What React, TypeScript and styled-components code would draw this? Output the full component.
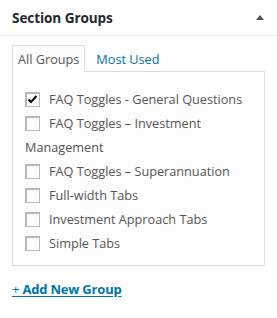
import React from "react";
import styled, { createGlobalStyle } from "styled-components";

const Global = createGlobalStyle`
  html, body { margin: 0; padding: 0; background: #fff; }
  body { font-family: "Open Sans", "Segoe UI", sans-serif; color: #555; }
  * { box-sizing: border-box; }
`;

const Box = styled.div`
  width: 277px;
  height: 318px;
  background: #fff;
`;

const Header = styled.div`
  height: 36px;
  border-bottom: 1px solid #eee;
  display: flex;
  align-items: center;
  justify-content: space-between;
  padding: 0 13px 1px 12px;
`;

const Title = styled.h2`
  margin: 0;
  font-size: 13.6px;
  font-weight: 700;
  color: #23282d;
  letter-spacing: -0.1px;
`;

const Toggle = styled.span`
  width: 0;
  height: 0;
  border-left: 4px solid transparent;
  border-right: 4px solid transparent;
  border-bottom: 5px solid #555;
  margin-top: 1px;
`;

const Inside = styled.div`
  padding: 9px 12px 0 12px;
`;

const Tabs = styled.ul`
  list-style: none;
  margin: 0 0 -1px 0;
  padding: 0;
  display: flex;
  position: relative;
  z-index: 1;
`;

const Tab = styled.li<{ $active?: boolean }>`
  height: 27px;
  padding: 0 5px;
  display: flex;
  align-items: center;
  font-size: 12.7px;
  border: 1px solid ${(p) => (p.$active ? "#ddd" : "transparent")};
  border-bottom-color: ${(p) => (p.$active ? "#fdfdfd" : "transparent")};
  background: ${(p) => (p.$active ? "#fdfdfd" : "transparent")};
  color: ${(p) => (p.$active ? "#555" : "#0073aa")};
  margin-right: ${(p) => (p.$active ? "5px" : "0")};
`;

const Panel = styled.div`
  border: 1px solid #ddd;
  background: #fdfdfd;
  height: 195px;
  padding: 15px 10px 0 12px;
`;

const Checklist = styled.ul`
  list-style: none;
  margin: 0;
  padding: 0;
`;

const Item = styled.li`
  font-size: 12.7px;
  line-height: 24px;
  color: #555;
`;

const Check = styled.span`
  display: inline-block;
  vertical-align: middle;
  position: relative;
  top: -1px;
  width: 15px;
  height: 15px;
  margin-right: 9px;
  background: #fff;
  border: 1px solid #b4b9be;
  box-shadow: inset 1px 1px 1px rgba(0, 0, 0, 0.3);
`;

const Tick = styled.svg`
  position: absolute;
  left: 1px;
  top: 1px;
`;

const AddLink = styled.a`
  display: inline-block;
  margin-top: 14px;
  font-size: 13px;
  font-weight: 700;
  letter-spacing: -0.2px;
  color: #0073aa;
  text-decoration: underline;
  text-underline-offset: 2px;
`;

const Plus = styled.span`
  font-weight: 400;
`;

const items: { label: string; checked?: boolean }[] = [
  { label: "FAQ Toggles - General Questions", checked: true },
  { label: "FAQ Toggles \u2013 Investment Management" },
  { label: "FAQ Toggles \u2013 Superannuation" },
  { label: "Full-width Tabs" },
  { label: "Investment Approach Tabs" },
  { label: "Simple Tabs" },
];

export default function App() {
  return (
    <Box>
      <Global />
      <Header>
        <Title>Section Groups</Title>
        <Toggle />
      </Header>
      <Inside>
        <Tabs>
          <Tab $active>All Groups</Tab>
          <Tab>Most Used</Tab>
        </Tabs>
        <Panel>
          <Checklist>
            {items.map((it) => (
              <Item key={it.label}>
                <Check>
                  {it.checked && (
                    <Tick width="11" height="11" viewBox="0 0 11 11">
                      <path d="M1.5 5.5 L4 8 L9.5 2" fill="none" stroke="#111" strokeWidth="2.2" />
                    </Tick>
                  )}
                </Check>
                {it.label}
              </Item>
            ))}
          </Checklist>
        </Panel>
        <AddLink href="#">
          <Plus>+</Plus> Add New Group
        </AddLink>
      </Inside>
    </Box>
  );
}
